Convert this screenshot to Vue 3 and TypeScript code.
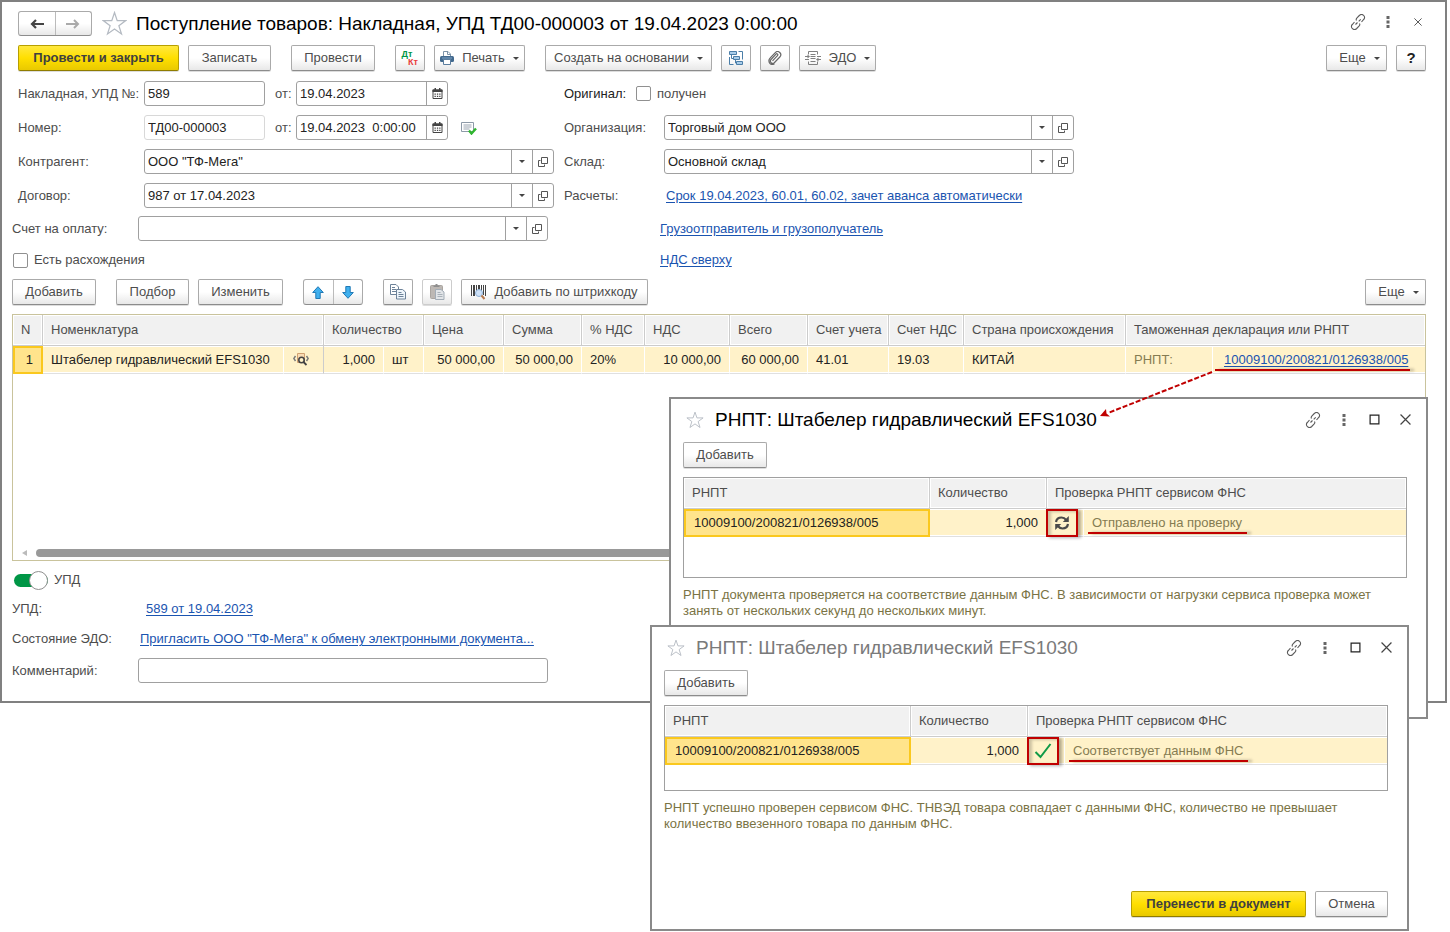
<script setup lang="ts">
import { ref } from 'vue'

interface Dialog {
  id: string
  state: 'pending' | 'ok'
  status: string
  note: string
  footer: boolean
}

const dialogTitle = 'РНПТ: Штабелер гидравлический EFS1030'
const rnpt = '10009100/200821/0126938/005'

const dialogs: Dialog[] = [
  {
    id: 'first',
    state: 'pending',
    status: 'Отправлено на проверку',
    note: 'РНПТ документа проверяется на соответствие данным ФНС. В зависимости от нагрузки сервиса проверка может занять от нескольких секунд до нескольких минут.',
    footer: false,
  },
  {
    id: 'second',
    state: 'ok',
    status: 'Соответствует данным ФНС',
    note: 'РНПТ успешно проверен сервисом ФНС. ТНВЭД товара совпадает с данными ФНС, количество не превышает количество ввезенного товара по данным ФНС.',
    footer: true,
  },
]

const invoiceNo = ref('589')
const invoiceDate = ref('19.04.2023')
const docNo = ref('ТД00-000003')
const docDate = ref('19.04.2023  0:00:00')
const counterparty = ref('ООО "ТФ-Мега"')
const contract = ref('987 от 17.04.2023')
const organization = ref('Торговый дом ООО')
const warehouse = ref('Основной склад')
const payInvoice = ref('')
const comment = ref('')
const originalReceived = ref(false)
const hasDiscrepancy = ref(false)
const updEnabled = ref(true)
</script>

<template>
  <div class="desktop">
    <svg class="defs" aria-hidden="true">
      <symbol id="i-star" viewBox="0 0 24 24">
        <path d="M12 1.5l2.6 7.7h8.2l-6.6 4.900 2.500 7.900-6.700-4.800L5.300 22l2.500-7.900L1.200 9.200h8.200z" fill="#fff" stroke="#b4bac2" stroke-width="1.200" />
      </symbol>
      <symbol id="i-link" viewBox="0 0 16 16">
        <path d="M6.500 6.500c-.6-1-.3-1.900.5-2.700l2.300-2.300c1.500-1.400 3.200-1.200 4.300-.1 1.300 1.200 1.300 2.900.1 4.100L11.500 8M9.500 9.500c.6 1 .3 1.900-.5 2.700l-2.300 2.300c-1.500 1.400-3.200 1.200-4.300.1-1.300-1.200-1.300-2.900-.1-4.100L4.500 8M5.500 10.500l2-2M8.700 7.300l2-2" fill="none" stroke="#5a5a5a" stroke-width="1.100" />
      </symbol>
      <symbol id="i-dots" viewBox="0 0 4 12">
        <path d="M.5 0h3v3h-3zM.5 4.500h3v3h-3zM.5 9h3v3h-3z" fill="#666" />
      </symbol>
      <symbol id="i-close" viewBox="0 0 10 10">
        <path d="M.5.5l9 9M9.500.5l-9 9" stroke="#444" stroke-width="1.100" />
      </symbol>
      <symbol id="i-max" viewBox="0 0 10 10">
        <path d="M1 1h8v8H1z" fill="none" stroke="#222" stroke-width="1.100" />
      </symbol>
      <symbol id="i-caret" viewBox="0 0 6 3">
        <path d="M0 0h6L3 3z" fill="#444" />
      </symbol>
      <symbol id="i-calendar" viewBox="0 0 11 11">
        <path d="M1 2h9v8.500H1z" fill="#fff" stroke="#444" />
        <path d="M.5 1.500h10v2.500H.5zM2.500 0h1.500v2H2.500zM7 0h1.500v2H7z" fill="#444" />
        <path d="M2.500 5.500h1.300v1.200H2.500zM4.900 5.500h1.300v1.200H4.900zM7.200 5.500h1.300v1.200H7.200zM2.500 7.800h1.300V9H2.500zM4.900 7.800h1.300V9H4.900zM7.200 7.800h1.300V9H7.200z" fill="#444" />
      </symbol>
      <symbol id="i-open" viewBox="0 0 10 10">
        <path d="M3.500.5h6v6h-6zM2.500 3.500h-2v6h6v-2" fill="none" stroke="#555" />
      </symbol>
    </svg>

    <main class="window">
      <header class="titlebar inset">
        <div class="split">
          <button type="button" aria-label="Назад">
            <svg width="14" height="10" viewBox="0 0 14 10"><path d="M14 5H2M6 1L2 5l4 4" fill="none" stroke="#444" stroke-width="2.200" /></svg>
          </button>
          <button type="button" aria-label="Вперед">
            <svg width="14" height="10" viewBox="0 0 14 10"><path d="M0 5h12M8 1l4 4-4 4" fill="none" stroke="#aaa" stroke-width="2" /></svg>
          </button>
        </div>
        <svg class="star big"><use href="#i-star" /></svg>
        <h1>Поступление товаров: Накладная, УПД ТД00-000003 от 19.04.2023 0:00:00</h1>
        <div class="wintools">
          <button type="button" class="ghost" aria-label="Ссылка"><svg width="16" height="16"><use href="#i-link" /></svg></button>
          <button type="button" class="ghost" aria-label="Меню"><svg width="4" height="12"><use href="#i-dots" /></svg></button>
          <button type="button" class="ghost" aria-label="Закрыть"><svg width="8" height="8"><use href="#i-close" /></svg></button>
        </div>
      </header>

      <div class="toolbar inset">
        <button type="button" class="btn primary w-post">Провести и закрыть</button>
        <button type="button" class="btn w-save">Записать</button>
        <button type="button" class="btn w-std apart">Провести</button>
        <button type="button" class="btn square apart dtkt"><span class="dt">Дт</span><span class="kt">Кт</span></button>
        <button type="button" class="btn w-print">
          <svg width="14" height="14" viewBox="0 0 14 14">
            <path d="M3.500 6V.5h4.500l2.500 2.500V6" fill="#fff" stroke="#7d93a8" /><path d="M7.500.5v3h3" fill="none" stroke="#7d93a8" />
            <rect y="5" width="14" height="6" rx="1.500" fill="#42698e" /><path d="M2 7h10" stroke="#7fa3c4" />
            <path d="M3.500 8.500h7v5h-7z" fill="#fff" stroke="#5b7d9e" />
          </svg>
          <span>Печать</span><svg class="caret"><use href="#i-caret" /></svg>
        </button>
        <button type="button" class="btn w-create apart"><span>Создать на основании</span><svg class="caret"><use href="#i-caret" /></svg></button>
        <button type="button" class="btn square" aria-label="Структура подчиненности">
          <svg width="16" height="16" viewBox="0 0 16 16" fill="none" stroke="#4b7ea8">
            <path d="M1.500 1.500h7v3h-7zM5.500 6.500h6v3h-6zM8.500 11.500h6v3h-6z" fill="#a9cdea" />
            <path d="M3.500 4.500v4h2M7.500 9.500v3.500h1M10.500 1.500h4v8M1.500 7v7.500h4" />
          </svg>
        </button>
        <button type="button" class="btn square" aria-label="Файлы">
          <svg width="14" height="14" viewBox="0 0 14 14" fill="none" stroke="#666" stroke-width="1.200">
            <path d="M4.500 9.800l5-5.200a1 1 0 0 0-1.500-1.500L3 8.500a2.300 2.300 0 0 0 3.300 3.200L11.800 6a3 3 0 0 0-4.500-4.400L2 7.200a3.700 3.700 0 0 0 0 5.300 3.700 3.700 0 0 0 4.500.2" />
          </svg>
        </button>
        <button type="button" class="btn w-edo">
          <svg width="16" height="14" viewBox="0 0 16 14" fill="none" stroke="#808080">
            <path d="M3.500 3.500v-3h9v3M3.500 10.500v3h9v-3M5.500 3.500h5M5.500 5.500h5M5.500 7.500h5M5.500 10.500h5" />
            <path d="M0 5.500h4M0 8.500h4M12 5.500h4M12 8.500h4" />
            <path d="M2.500 3.500L5 5.500 2.500 7.500zM13.500 6.500L11 8.500l2.500 2z" fill="#808080" stroke="none" />
          </svg>
          <span>ЭДО</span><svg class="caret"><use href="#i-caret" /></svg>
        </button>
        <span class="grow"></span>
        <button type="button" class="btn w-more"><span>Еще</span><svg class="caret"><use href="#i-caret" /></svg></button>
        <button type="button" class="btn square help">?</button>
      </div>

      <form class="fields" @submit.prevent>
        <div class="row inset">
          <label class="lbl" for="inv-no">Накладная, УПД №:</label>
          <div class="area">
            <div class="box short"><input id="inv-no" v-model="invoiceNo" /></div>
            <label class="from" for="inv-date">от:</label>
            <div class="box date"><input id="inv-date" v-model="invoiceDate" /><button type="button" aria-label="Календарь"><svg width="11" height="11"><use href="#i-calendar" /></svg></button></div>
          </div>
          <span class="lbl2 dark">Оригинал:</span>
          <label class="check received"><input v-model="originalReceived" type="checkbox" />получен</label>
        </div>
        <div class="row inset">
          <label class="lbl" for="doc-no">Номер:</label>
          <div class="area">
            <div class="box short pale"><input id="doc-no" v-model="docNo" /></div>
            <label class="from" for="doc-date">от:</label>
            <div class="box date"><input id="doc-date" v-model="docDate" /><button type="button" aria-label="Календарь"><svg width="11" height="11"><use href="#i-calendar" /></svg></button></div>
            <svg class="posted" width="16" height="14" viewBox="0 0 16 14">
              <path d="M.5 1.500h12v9H.5z" fill="#fff" stroke="#8d9aa8" /><path d="M2.500 4h8M2.500 6h8M2.500 8h6" stroke="#9aa5b1" />
              <path d="M8 9.500l2.500 3L15 7.500" fill="none" stroke="#2fb52f" stroke-width="2.400" />
            </svg>
          </div>
          <label class="lbl2" for="org">Организация:</label>
          <div class="box combo"><input id="org" v-model="organization" /><button type="button" aria-label="Выбрать"><svg class="caret"><use href="#i-caret" /></svg></button><button type="button" aria-label="Открыть"><svg width="10" height="10"><use href="#i-open" /></svg></button></div>
        </div>
        <div class="row inset">
          <label class="lbl" for="contr">Контрагент:</label>
          <div class="box combo"><input id="contr" v-model="counterparty" /><button type="button" aria-label="Выбрать"><svg class="caret"><use href="#i-caret" /></svg></button><button type="button" aria-label="Открыть"><svg width="10" height="10"><use href="#i-open" /></svg></button></div>
          <label class="lbl2" for="store">Склад:</label>
          <div class="box combo"><input id="store" v-model="warehouse" /><button type="button" aria-label="Выбрать"><svg class="caret"><use href="#i-caret" /></svg></button><button type="button" aria-label="Открыть"><svg width="10" height="10"><use href="#i-open" /></svg></button></div>
        </div>
        <div class="row inset">
          <label class="lbl" for="deal">Договор:</label>
          <div class="box combo"><input id="deal" v-model="contract" /><button type="button" aria-label="Выбрать"><svg class="caret"><use href="#i-caret" /></svg></button><button type="button" aria-label="Открыть"><svg width="10" height="10"><use href="#i-open" /></svg></button></div>
          <span class="lbl2">Расчеты:</span>
          <a href="#" class="lead">Срок 19.04.2023, 60.01, 60.02, зачет аванса автоматически</a>
        </div>
        <div class="row">
          <label class="lbl" for="pay">Счет на оплату:</label>
          <div class="box combo"><input id="pay" v-model="payInvoice" /><button type="button" aria-label="Выбрать"><svg class="caret"><use href="#i-caret" /></svg></button><button type="button" aria-label="Открыть"><svg width="10" height="10"><use href="#i-open" /></svg></button></div>
          <span class="lbl2"></span>
          <a href="#" class="lead">Грузоотправитель и грузополучатель</a>
        </div>
        <div class="row low">
          <label class="check discrepancy"><input v-model="hasDiscrepancy" type="checkbox" />Есть расхождения</label>
          <span class="lbl2"></span>
          <a href="#" class="lead">НДС сверху</a>
        </div>
      </form>

      <div class="toolbar goods-bar">
        <button type="button" class="btn w-std">Добавить</button>
        <button type="button" class="btn w-pick apart">Подбор</button>
        <button type="button" class="btn w-edit">Изменить</button>
        <div class="split apart">
          <button type="button" aria-label="Вверх"><svg width="12" height="13" viewBox="0 0 12 13"><path d="M6 .7l5.300 5.800H8.200v6H3.800v-6H.7z" fill="#3fb0ee" stroke="#2179b5" /></svg></button>
          <button type="button" aria-label="Вниз"><svg width="12" height="13" viewBox="0 0 12 13"><path d="M6 12.300L.7 6.500h3.100v-6h4.400v6h3.100z" fill="#3fb0ee" stroke="#2179b5" /></svg></button>
        </div>
        <button type="button" class="btn square apart" aria-label="Копировать">
          <svg width="16" height="16" viewBox="0 0 16 16" stroke="#6d8299">
            <path d="M.5.500h5.500l2.500 2.500v7.500h-8z" fill="#fff" /><path d="M2 3.500h3M2 5.500h4M2 7.500h4" />
            <path d="M6.500 5.500h6L15.500 8v7h-9z" fill="#eef5fb" /><path d="M8.500 8.500h3M8.500 10.500h5M8.500 12.500h5" />
          </svg>
        </button>
        <button type="button" class="btn square faded" aria-label="Вставить" disabled>
          <svg width="15" height="16" viewBox="0 0 15 16">
            <rect x=".5" y="1.500" width="12" height="13" rx="1" fill="#bdb8b4" stroke="#aaa5a0" /><path d="M3.500 3V1.500h2V0h2v1.500h2V3z" fill="#8e8e8e" />
            <path d="M5.500 5.500h5.500l3 2.500v7.500H5.500z" fill="#e2e5e8" stroke="#a3adb7" /><path d="M7.500 8.500h3M7.500 10.500h5M7.500 12.500h5" stroke="#a9b1b9" />
          </svg>
        </button>
        <button type="button" class="btn w-barcode">
          <svg width="15" height="16" viewBox="0 0 15 16">
            <path d="M0 1h1v11H0zM2 1h2v11H2zM5 1h1v10H5zM7 1h2v5H7zM10 1h1v6h-1zM12 1h1v10h-1zM14 1h1v11h-1z" fill="#444" />
            <circle cx="8" cy="9" r="3.500" fill="#cfe2f8" stroke="#8fb0d4" /><path d="M10.500 11.500l3 3.500" stroke="#b87a4e" stroke-width="2" />
          </svg>
          <span>Добавить по штрихкоду</span>
        </button>
        <span class="grow"></span>
        <button type="button" class="btn w-more"><span>Еще</span><svg class="caret"><use href="#i-caret" /></svg></button>
      </div>

      <section class="goods">
        <table class="grid">
          <colgroup>
            <col class="c30" /><col class="c241" /><col class="c40" /><col class="c60" /><col class="c40" /><col class="c80" /><col class="c78" /><col class="c63" /><col class="c85" /><col class="c78" /><col class="c81" /><col class="c75" /><col class="c162" /><col class="c87" /><col />
          </colgroup>
          <thead>
            <tr>
              <th>N</th><th colspan="2">Номенклатура</th><th colspan="2">Количество</th><th>Цена</th><th>Сумма</th><th>% НДС</th><th>НДС</th><th>Всего</th><th>Счет учета</th><th>Счет НДС</th><th>Страна происхождения</th><th colspan="2">Таможенная декларация или РНПТ</th>
            </tr>
          </thead>
          <tbody>
            <tr>
              <td class="num active">1</td>
              <td>Штабелер гидравлический EFS1030</td>
              <td class="mid">
                <svg width="16" height="13" viewBox="0 0 16 13" fill="none">
                  <path d="M4.500.5h7v9h-7z" fill="#f9dcb4" stroke="#d0a070" />
                  <path d="M2.500 3L.8 5.500l1.700 2.500M13.500 3l1.700 2.500L13.500 8" stroke="#777" stroke-width="1.400" />
                  <circle cx="8.500" cy="7" r="2.700" fill="#fff2c9" stroke="#444" stroke-width="1.600" /><path d="M10.500 9l3 3" stroke="#444" stroke-width="1.800" />
                </svg>
              </td>
              <td class="num">1,000</td><td>шт</td><td class="num">50 000,00</td><td class="num">50 000,00</td><td>20%</td><td class="num">10 000,00</td><td class="num">60 000,00</td><td>41.01</td><td>19.03</td><td>КИТАЙ</td>
              <td class="muted">РНПТ:</td>
              <td class="decl"><a href="#" class="marked">{{ rnpt }}</a></td>
            </tr>
          </tbody>
        </table>
        <div class="scroll">
          <svg width="5" height="6" viewBox="0 0 5 6"><path d="M5 0v6L0 3z" fill="#bbb" /></svg>
          <div class="thumb"></div>
        </div>
      </section>

      <label class="switch"><input v-model="updEnabled" type="checkbox" role="switch" />УПД</label>
      <div class="row low"><span class="lbl">УПД:</span><a href="#" class="upd">589 от 19.04.2023</a></div>
      <div class="row low"><span class="lbl">Состояние ЭДО:</span><a href="#" class="lead">Пригласить ООО "ТФ-Мега" к обмену электронными документа...</a></div>
      <div class="row"><label class="lbl" for="cmt">Комментарий:</label><div class="box combo"><input id="cmt" v-model="comment" /></div></div>
    </main>

    <section v-for="d in dialogs" :key="d.id" class="dialog" :class="d.id">
      <header class="titlebar">
        <svg class="star"><use href="#i-star" /></svg>
        <h2>{{ dialogTitle }}</h2>
        <div class="wintools">
          <button type="button" class="ghost" aria-label="Ссылка"><svg width="16" height="16"><use href="#i-link" /></svg></button>
          <button type="button" class="ghost" aria-label="Меню"><svg width="4" height="12"><use href="#i-dots" /></svg></button>
          <button type="button" class="ghost" aria-label="Развернуть"><svg width="11" height="11"><use href="#i-max" /></svg></button>
          <button type="button" class="ghost" aria-label="Закрыть"><svg width="11" height="11"><use href="#i-close" /></svg></button>
        </div>
      </header>
      <button type="button" class="btn w-std">Добавить</button>
      <div class="list">
        <table class="grid">
          <colgroup><col class="c246" /><col class="c117" /><col class="c37" /><col /></colgroup>
          <thead><tr><th>РНПТ</th><th>Количество</th><th colspan="2">Проверка РНПТ сервисом ФНС</th></tr></thead>
          <tbody>
            <tr>
              <td class="active">{{ rnpt }}</td>
              <td class="num">1,000</td>
              <td class="state">
                <span class="frame">
                  <svg v-if="d.state === 'pending'" width="16" height="16" viewBox="0 0 16 16" fill="none" stroke="#4a4a4a" stroke-width="2.200">
                    <path d="M2 7c.5-3 3-4.500 5.500-4.500 2 0 3.500.8 4.500 2.300M14 9c-.5 3-3 4.500-5.500 4.500-2 0-3.500-.8-4.500-2.300" />
                    <path d="M14.800 1v6H8.800zM1.200 15V9h6z" fill="#4a4a4a" stroke="none" />
                  </svg>
                  <svg v-else width="18" height="16" viewBox="0 0 18 16" fill="none"><path d="M1.500 9l5 5L16.500 1" stroke="#109a47" stroke-width="2" /></svg>
                </span>
              </td>
              <td class="muted"><span class="marked">{{ d.status }}</span></td>
            </tr>
          </tbody>
        </table>
      </div>
      <p>{{ d.note }}</p>
      <footer v-if="d.footer">
        <button type="button" class="btn primary w-move">Перенести в документ</button>
        <button type="button" class="btn w-cancel">Отмена</button>
      </footer>
    </section>

    <svg class="pointer" width="122" height="56" viewBox="0 0 122 56" aria-hidden="true">
      <path d="M116 6L12 47" stroke="#c00000" stroke-width="2" stroke-dasharray="5 2" />
      <path d="M4 50l6-7 .5 4.500 3.500 3z" fill="#c00000" />
    </svg>
  </div>
</template>

<style>
body {
  margin: 0;
  background: #fff;
}
</style>

<style scoped>
.desktop {
  position: relative;
  min-height: 100vh;
  overflow: hidden;
  font: 13px/16px "Liberation Sans", Arial, sans-serif;
  color: #4d4d4d;
}
.desktop *,
.desktop *::before,
.desktop *::after {
  box-sizing: border-box;
}
button,
input {
  font: inherit;
  color: inherit;
  margin: 0;
}
svg {
  display: block;
  flex: none;
}
.defs {
  position: absolute;
  width: 0;
  height: 0;
}
a {
  color: #1a54b0;
  text-decoration: underline;
  text-underline-offset: 2px;
}
.window {
  margin-right: 3px;
  padding: 9px 19px 18px 10px;
  border: 2px solid #808080;
  background: #fff;
}
.inset {
  padding-left: 6px;
}
.titlebar {
  display: flex;
  align-items: center;
  height: 25px;
}
h1,
h2 {
  margin: 0;
  flex: 1;
  font-size: 19px;
  line-height: 24px;
  font-weight: 400;
  color: #000;
  white-space: nowrap;
}
.star {
  width: 18px;
  height: 18px;
  margin-right: 11px;
}
.star.big {
  width: 25px;
  height: 25px;
  margin: 0 9px 0 10px;
}
.split {
  display: flex;
  height: 26px;
  border: 1px solid #aaa;
  border-bottom-color: #8c8c8c;
  border-radius: 3px;
  background: linear-gradient(#fff 50%, #e8e8e8);
}
.titlebar .split {
  width: 74px;
  height: 25px;
}
.goods-bar .split {
  width: 60px;
}
.split button {
  flex: 1;
  display: flex;
  align-items: center;
  justify-content: center;
  padding: 0;
  border: 0;
  background: none;
}
.split button + button {
  border-left: 1px solid #bbb;
}
.wintools {
  display: flex;
}
.ghost {
  display: flex;
  align-items: center;
  justify-content: center;
  width: 30px;
  height: 24px;
  padding: 0;
  border: 0;
  background: none;
}
.window .wintools {
  margin-right: -7px;
  padding-bottom: 4px;
}
.toolbar {
  display: flex;
  gap: 9px;
  margin-top: 9px;
}
.apart {
  margin-left: 11px;
}
.grow {
  flex: 1;
}
.btn {
  display: flex;
  align-items: center;
  justify-content: center;
  gap: 8px;
  height: 26px;
  padding: 0;
  border: 1px solid #aaa;
  border-bottom-color: #8c8c8c;
  border-radius: 2px;
  background: linear-gradient(#fff 50%, #e8e8e8);
  box-shadow: 0 1px 0 #ddd;
  white-space: nowrap;
}
.primary {
  border-color: #b79f00;
  border-bottom-color: #8f7c00;
  background: linear-gradient(#ffe83f, #ffdf00 50%, #e9c900);
  font-weight: 700;
  color: #404040;
}
.caret {
  width: 6px;
  height: 3px;
}
.square {
  width: 30px;
}
.faded {
  border-color: #ccc;
}
.help {
  font-size: 15px;
  font-weight: 700;
  color: #222;
}
.dtkt {
  flex-direction: column;
  gap: 0;
  font: 700 9px/8px "Liberation Sans", Arial, sans-serif;
}
.dt {
  margin-right: 6px;
  color: #009646;
}
.kt {
  margin-left: 6px;
  color: #e83c3c;
}
.w-post { width: 161px; }
.w-save { width: 83px; }
.w-std { width: 84px; }
.w-edit { width: 85px; }
.w-pick { width: 73px; }
.w-print { width: 91px; }
.w-create { width: 167px; }
.w-edo { width: 77px; }
.w-more { width: 61px; padding-left: 6px; }
.w-barcode { width: 187px; }
.w-move { width: 175px; }
.w-cancel { width: 73px; }

.fields {
  display: flex;
  flex-direction: column;
  gap: 8px;
  margin-top: 10px;
}
.row {
  display: flex;
  align-items: center;
  height: 25px;
}
.row.inset + .row.inset {
  margin-top: 1px;
}
.row.low {
  height: 22px;
}
.lbl {
  width: 126px;
  flex: none;
  white-space: nowrap;
}
.lbl2 {
  width: 100px;
  margin-left: 10px;
  flex: none;
}
.row:not(.inset) .lbl2 {
  margin-left: 10px;
}
.dark {
  color: #222;
}
.area {
  display: flex;
  align-items: center;
  width: 410px;
}
.from {
  width: 31px;
  padding-left: 10px;
}
.box {
  display: flex;
  height: 25px;
  border: 1px solid #a0a0a0;
  border-radius: 3px;
  background: #fff;
  color: #222;
}
.box input {
  flex: 1;
  min-width: 0;
  padding: 0 3px;
  border: 0;
  outline: 0;
  background: none;
  white-space: pre;
}
.box button {
  display: flex;
  align-items: center;
  justify-content: center;
  width: 21px;
  padding: 0;
  border: 0;
  border-left: 1px solid #a0a0a0;
  background: none;
}
.box.short {
  width: 121px;
}
.box.pale {
  border-color: #d8d8d8;
}
.box.date {
  width: 152px;
}
.box.combo {
  width: 410px;
}
.posted {
  margin-left: 13px;
}
.lead {
  padding-left: 2px;
  white-space: nowrap;
}
.upd {
  padding-left: 8px;
}
.check {
  display: flex;
  align-items: center;
  gap: 6px;
}
.check input {
  appearance: none;
  width: 15px;
  height: 15px;
  border: 1px solid #909090;
  border-radius: 2px;
  background: #fff;
}
.received {
  margin-left: -28px;
}
.discrepancy {
  width: 536px;
  padding-left: 1px;
}
.goods-bar {
  margin-top: 8px;
}
.goods {
  display: flex;
  flex-direction: column;
  justify-content: space-between;
  min-height: 247px;
  margin-top: 9px;
  border: 1px solid #c9c39c;
}
.grid {
  width: 100%;
  table-layout: fixed;
  border-collapse: separate;
  border-spacing: 0;
}
th,
td {
  padding: 0 0 0 8px;
  text-align: left;
  font-weight: 400;
  white-space: nowrap;
}
th {
  height: 31px;
  border-right: 1px solid #ccc;
  border-bottom: 1px solid #ccc;
  background: #f1f1f1;
  box-shadow: inset 0 0 0 1px #fff;
}
td {
  height: 28px;
  border-right: 1px solid #fff;
  border-bottom: 1px solid #e0e0e0;
  background: #fff2c9;
  color: #222;
  box-shadow: inset 0 1px #fff, inset 0 -1px #fff;
}
th:last-child,
td:last-child {
  border-right: 0;
}
td.num {
  padding: 0 8px 0 0;
  text-align: right;
}
td.mid {
  padding: 0;
  border-right-color: #ccc;
}
td.mid svg {
  margin: 0 0 0 9px;
}
td.active {
  border: 2px solid #fac81e;
  background: #ffe48c;
  box-shadow: none;
}
td.muted {
  color: #857c52;
}
.decl {
  padding-left: 11px;
}
.marked {
  position: relative;
}
.marked::after {
  content: "";
  position: absolute;
  left: -9px;
  right: -2px;
  bottom: -4px;
  height: 2px;
  background: #c00000;
  box-shadow: 4px 0 3px rgba(0, 0, 0, 0.3);
}
.dialog .marked::after {
  left: -4px;
  right: -5px;
}
.c30 { width: 30px; }
.c37 { width: 37px; }
.c40 { width: 40px; }
.c60 { width: 60px; }
.c63 { width: 63px; }
.c75 { width: 75px; }
.c78 { width: 78px; }
.c80 { width: 80px; }
.c81 { width: 81px; }
.c85 { width: 85px; }
.c87 { width: 87px; }
.c117 { width: 117px; }
.c162 { width: 162px; }
.c241 { width: 241px; }
.c246 { width: 246px; }
.scroll {
  display: flex;
  align-items: center;
  gap: 9px;
  padding: 0 20px 3px 9px;
}
.thumb {
  flex: 1;
  height: 8px;
  border-radius: 4px;
  background: #999;
}
.switch {
  display: flex;
  align-items: center;
  gap: 6px;
  height: 20px;
  margin: 9px 0 0 2px;
}
.switch input {
  appearance: none;
  display: flex;
  align-items: center;
  justify-content: flex-end;
  width: 34px;
  height: 13px;
  border-radius: 7px;
  background: #a0a0a0;
}
.switch input:not(:checked) {
  justify-content: flex-start;
}
.switch input:checked {
  background: #009646;
}
.switch input::before {
  content: "";
  width: 19px;
  height: 19px;
  flex: none;
  border: 1px solid #909090;
  border-radius: 50%;
  background: #fff;
}
.window > .row {
  margin-top: 8px;
}

.dialog {
  position: absolute;
  padding: 8px 19px 12px 12px;
  border: 2px solid #8a8a8a;
  background: #fff;
}
.dialog.first {
  top: 397px;
  left: 669px;
  right: 22px;
  min-height: 322px;
}
.dialog.second {
  top: 625px;
  left: 650px;
  right: 41px;
}
.dialog .titlebar {
  padding-left: 3px;
}
.second h2 {
  color: #7a7a7a;
}
.dialog .wintools {
  margin-right: -14px;
}
.dialog .ghost {
  width: 31px;
}
.dialog > .btn {
  margin-top: 10px;
}
.list {
  min-height: 101px;
  margin-top: 9px;
  border: 1px solid #a0a0a0;
}
.second .list {
  min-height: 86px;
}
td.state {
  padding: 0;
}
.frame {
  position: relative;
  display: flex;
  align-items: center;
  justify-content: center;
  width: 32px;
  height: 28px;
  margin: -1px 0 -1px -1px;
  border: 2px solid #c00000;
  box-shadow: 3px 1px 3px rgba(0, 0, 0, 0.3), inset 3px 1px 3px rgba(0, 0, 0, 0.2);
}
p {
  margin: 9px 0 0;
  color: #7a7344;
}
footer {
  display: flex;
  justify-content: flex-end;
  gap: 9px;
  margin-top: 59px;
}
.pointer {
  position: absolute;
  top: 366px;
  right: 232px;
}
</style>
